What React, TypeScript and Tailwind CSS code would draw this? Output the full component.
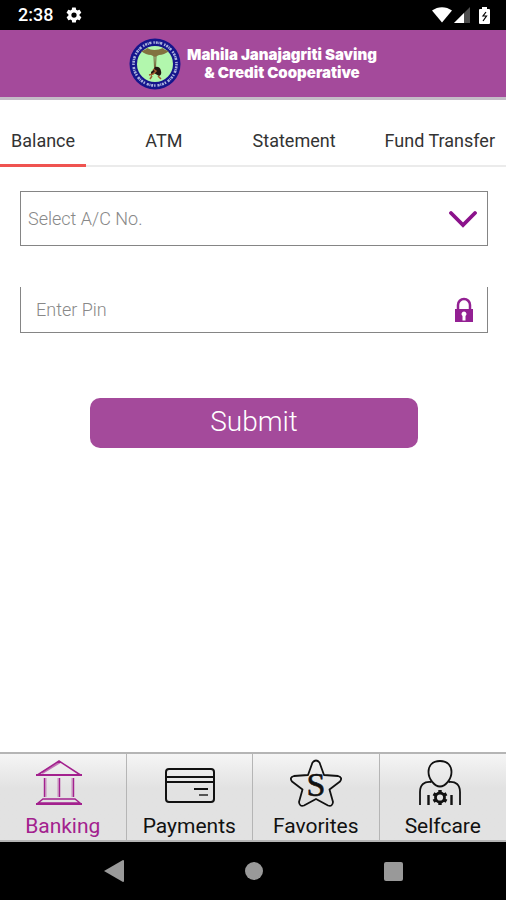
import { useState } from "react";

const tabs = [
    { name: "Balance", className: "px-[11px]" },
    { name: "ATM", className: "flex-1" },
    { name: "Statement", className: "px-[11px]" },
    { name: "Fund Transfer", className: "pl-[38px] pr-[11px]" },
];

const GEAR = "M19.4 13a7.5 7.5 0 0 0 0-2l2.1-1.6a.5.5 0 0 0 .1-.6l-2-3.5a.5.5 0 0 0-.6-.2l-2.5 1a7.3 7.3 0 0 0-1.7-1l-.4-2.6a.5.5 0 0 0-.5-.5h-4a.5.5 0 0 0-.5.5L9 5.1a7.3 7.3 0 0 0-1.7 1l-2.5-1a.5.5 0 0 0-.6.2l-2 3.5a.5.5 0 0 0 .1.6L4.5 11a7.5 7.5 0 0 0 0 2l-2.1 1.6a.5.5 0 0 0-.1.6l2 3.5c.1.2.4.3.6.2l2.5-1c.5.4 1.1.7 1.7 1l.4 2.6c0 .3.2.5.5.5h4c.3 0 .5-.2.5-.5l.4-2.6a7.3 7.3 0 0 0 1.7-1l2.5 1c.2.1.5 0 .6-.2l2-3.5a.5.5 0 0 0-.1-.6L19.4 13zM12 15.5a3.5 3.5 0 1 1 0-7 3.5 3.5 0 0 1 0 7z";

function StatusBar() {
    return (
        <div className="flex h-[30px] items-center bg-black pl-[18px] pr-[16px] text-white">
            <span className="text-lg font-medium leading-5">2:38</span>
            <svg className="ml-[12px] size-[18px]" viewBox="0 0 24 24" fill="currentColor">
                <path d={GEAR} />
            </svg>
            <div className="ml-auto flex items-center gap-[2px]">
                <svg width="20" height="16" viewBox="0 0 20 16" fill="currentColor">
                    <path d="M0 3.5C6-1 14-1 20 3.5L10 15.5z" />
                </svg>
                <svg width="17" height="16" viewBox="0 0 17 16" fill="currentColor">
                    <path d="M0 16L16 0v16z" opacity=".3" />
                    <path d="M0 16L10 6v10z" />
                </svg>
                <svg className="ml-[6px]" width="11" height="17" viewBox="0 0 11 17">
                    <path d="M3 0h5v2h2q1 0 1 1v13q0 1-1 1H1q-1 0-1-1V3q0-1 1-1h2z" fill="#fff" />
                    <path d="M7 5L4 9h3.5L4 14" fill="none" stroke="#000" strokeWidth="1.2" />
                </svg>
            </div>
        </div>
    );
}

function Logo() {
    return (
        <svg width="52" height="52" viewBox="0 0 52 52" fill="none">
            <circle cx="26" cy="26" r="25.5" fill="#15158c" />
            <circle cx="26" cy="26" r="21.5" stroke="#a9b1dc" strokeWidth="2.6" strokeDasharray="1.5 1 2 .7 1 .6 2.2 2" />
            <circle cx="26" cy="26" r="18" fill="#b2f7ad" />
            <path d="M25 18l.5 12M27 18l-.5 12" stroke="#756039" strokeWidth="1" />
            <path d="M12 13q5-1 6-3 7 4 16 0 1 2 6 3-5 4-10 4l-4 2-4-2q-5 0-10-4z" fill="#82723f" />
            <path d="M26 29q5-1 6 4 1 4-2 5l-5-3-3 3v-4q2-1 4-5z" fill="#251612" />
            <path d="M24 31l3 2-3 3-4 1M23 38l-2 3M29 38l3 3" stroke="#a2592f" strokeWidth="1.5" />
        </svg>
    );
}

function BankIcon() {
    return (
        <svg className="mr-2" width="46" height="46" viewBox="0 0 46 46" fill="none" stroke="currentColor" strokeWidth="1.5">
            <path d="M1.5 16L23 2l21.5 14z" />
            <path d="M6 14L24 3" strokeWidth="2.5" opacity=".6" />
            <path d="M0 16h46" strokeWidth="2" />
            <path d="M9 19v19M23 19v19M37 19v19" strokeWidth="3" opacity=".45" />
            <path d="M8.5 19v19M23.5 19v19M37.5 19v19" strokeWidth="1" />
            <path d="M7 40h32l5 4H2z" />
            <path d="M0 45h46" strokeWidth="2" />
        </svg>
    );
}

function CardIcon() {
    return (
        <svg className="ml-[2px]" width="50" height="46" viewBox="0 0 50 46" fill="none" stroke="currentColor" strokeWidth="2">
            <rect x="1" y="10" width="48" height="33" rx="3" />
            <path d="M1 18h48M1 23h48M29 30h14" />
            <path d="M34 36h9" stroke="#555" />
        </svg>
    );
}

function StarIcon() {
    return (
        <svg width="52" height="48" viewBox="0 0 52 48" fill="none" stroke="currentColor" strokeWidth="1.8" strokeLinejoin="round">
            <path d="M22.5 3.5q3.5-4 7 0L34 16l14 1q5 1.5 2 5.5L39.5 30.5 43 43q-.5 5-5 3.5L26 40 14 46.5q-4.500 1.5-5-3.5L12.5 30.5 2 22.5q-3-4 2-5.5l14-1z" />
            <text x="26" y="37" textAnchor="middle" fill="currentColor" strokeWidth=".6" fontFamily="Liberation Serif, serif" fontSize="34">S</text>
        </svg>
    );
}

function SelfcareIcon() {
    return (
        <svg className="mr-[6px]" width="42" height="46" viewBox="0 0 42 46" fill="none" stroke="currentColor" strokeWidth="1.8">
            <path d="M21 2C13 2 9.5 7 9.5 13c0 7 6 14.5 11.5 14.5S32.5 20 32.5 13C32.5 7 29 2 21 2z" />
            <path d="M12.5 23C5 22 1 26 1 33v13M29.5 23C37 22 41 26 41 33v13" />
            <path d="M9.5 36v10M32.5 36v10" strokeWidth="2.4" />
            <circle cx="21" cy="38.5" r="4.5" strokeWidth="2.8" />
            <path d="M21 31v3M21 43v3M14.5 34.7l2.6 1.5M24.9 40.8l2.6 1.5M14.5 42.3l2.6-1.5M24.9 36.2l2.6-1.5" strokeWidth="3.4" />
        </svg>
    );
}

const navItems = [
    { name: "Banking", icon: BankIcon },
    { name: "Payments", icon: CardIcon },
    { name: "Favorites", icon: StarIcon },
    { name: "Selfcare", icon: SelfcareIcon },
];

export default function App() {
    const [activeTab, setActiveTab] = useState("Balance");
    const [activeNav, setActiveNav] = useState("Banking");
    const [pin, setPin] = useState("");

    return (
        <div className="flex min-h-screen flex-col bg-white font-[Roboto,sans-serif]">
            <StatusBar />

            <header className="flex h-[70px] items-center justify-center gap-[6px] border-b-3 border-[#c4bcc7] bg-[#a44a9b]">
                <Logo />
                <h1 className="text-center font-[Inter,sans-serif] text-[15px] font-black leading-[18px] text-white">
                    Mahila Janajagriti Saving
                    <br />
                    &amp; Credit Cooperative
                </h1>
            </header>

            <nav className="flex h-[67px] border-b-2 border-[#ebebeb]">
                {tabs.map((tab) => (
                    <button
                        key={tab.name}
                        onClick={() => setActiveTab(tab.name)}
                        className={`-mb-[2px] border-b-3 pt-[17px] text-lg text-[#333] ${tab.className} ${activeTab === tab.name ? "border-[#ef5350]" : "border-transparent"}`}
                    >
                        {tab.name}
                    </button>
                ))}
            </nav>

            <main className="flex flex-1 flex-col pl-5 pr-[18px] pt-[24px]">
                <div className="grid items-center">
                    <select
                        aria-label="Select A/C No."
                        className="col-start-1 row-start-1 h-[55px] w-full appearance-none border border-[#858585] bg-white px-[7px] text-lg font-light text-[#888]"
                    >
                        <option>Select A/C No.</option>
                    </select>
                    <svg className="pointer-events-none col-start-1 row-start-1 mr-[11px] justify-self-end" width="28" height="18" viewBox="0 0 28 18" fill="none" stroke="#8b128b" strokeWidth="3.8" strokeLinecap="round">
                        <path d="M2 3l12 12L26 3" />
                    </svg>
                </div>

                <div className="mt-[41px] flex h-[46px] items-center border border-t-0 border-[#858585] pl-[15px] pr-[14px]">
                    <input
                        type="password"
                        aria-label="Enter Pin"
                        placeholder="Enter Pin"
                        value={pin}
                        onChange={(e) => setPin(e.target.value)}
                        className="min-w-0 flex-1 text-lg font-light outline-none placeholder:text-[#888]"
                    />
                    <svg width="18" height="26" viewBox="0 0 18 26">
                        <path d="M3 13V8a6 6 0 0 1 12 0v5" fill="none" stroke="#932093" strokeWidth="2.5" />
                        <path d="M0 12h18v13H0z" fill="#932093" />
                        <path d="M9 14.5a2.5 2.5 0 0 0-1.5 4.5v4.5h3V19A2.5 2.5 0 0 0 9 14.5z" fill="#fff" />
                    </svg>
                </div>

                <button className="mt-[65px] h-[50px] w-[70%] self-center rounded-[10px] bg-[#a44a9b] pb-[2px] text-[28px] font-light text-white">
                    Submit
                </button>
            </main>

            <nav className="grid h-[90px] grid-cols-4 border-y-2 border-[#b5b5b5] bg-linear-to-b from-[#f5f5f5] to-[#e2e2e2] to-40%">
                {navItems.map(({ name, icon: Icon }) => (
                    <button
                        key={name}
                        onClick={() => setActiveNav(name)}
                        className={`flex flex-col items-center justify-between border-r border-[#b5b5b5] pt-[5px] text-[21px] leading-7 last:border-r-0 ${activeNav === name ? "text-[#a3218e]" : "text-[#111]"}`}
                    >
                        <Icon />
                        {name}
                    </button>
                ))}
            </nav>

            <div className="flex h-[58px] items-center justify-center gap-[121px] bg-black text-[#999]">
                <button aria-label="Back">
                    <svg width="20" height="22" viewBox="0 0 20 22" fill="currentColor">
                        <path d="M0 11L19 0q1 0 1 1v20q0 1-1 1z" />
                    </svg>
                </button>
                <button aria-label="Home" className="size-[18px] rounded-full bg-[#999]" />
                <button aria-label="Recent apps" className="size-[19px] rounded-xs bg-[#999]" />
            </div>
        </div>
    );
}
